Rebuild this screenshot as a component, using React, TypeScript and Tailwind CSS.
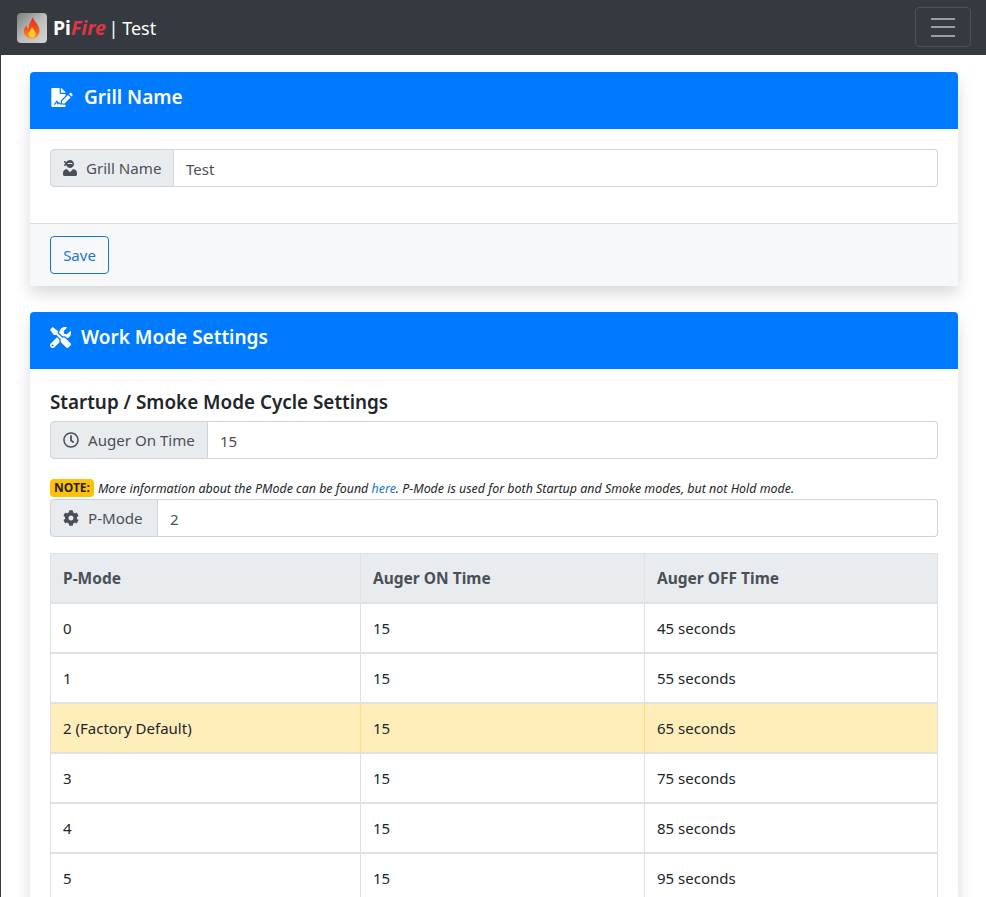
import React from "react";
import { FaFileSignature, FaUserNinja, FaTools, FaRegClock, FaCog } from "react-icons/fa";

const rows = [
  ["0", "15", "45 seconds"],
  ["1", "15", "55 seconds"],
  ["2 (Factory Default)", "15", "65 seconds"],
  ["3", "15", "75 seconds"],
  ["4", "15", "85 seconds"],
  ["5", "15", "95 seconds"],
];

function Logo() {
  return (
    <div className="w-[30px] h-[30px] rounded-[4px] bg-gradient-to-br from-[#7c7c7c] via-[#bdbdbd] to-[#d6d6d6] flex items-center justify-center">
      <svg width="16" height="22" viewBox="0 0 18 24">
        <defs>
          <linearGradient id="fl" x1="0" y1="0" x2="0" y2="1">
            <stop offset="0" stopColor="#e62a1c" />
            <stop offset="0.55" stopColor="#f4521c" />
            <stop offset="1" stopColor="#fb9f1e" />
          </linearGradient>
        </defs>
        <path d="M10 0c1 4 3 5 5 8 2 3 3 6 2 10-1 4-4 6-8 6s-8-2-9-6c-1-4 1-7 3-9 0 2 1 3 2 4 0-5 3-9 5-13z" fill="url(#fl)" />
        <path d="M9 11c1 3 4 4 4 8 0 2-2 4-4 4s-4-2-4-4c0-3 3-4 4-8z" fill="#fdc935" />
      </svg>
    </div>
  );
}

function Field({ icon, label, value, labelW }: { icon: React.ReactNode; label: string; value: string; labelW: string }) {
  return (
    <div className="flex h-[38px] text-[#495057]">
      <div className={`${labelW} shrink-0 flex items-center gap-[9px] pl-[12px] bg-[#e9ecef] border border-[#ced4da] rounded-l-[4px] text-[15.1px]`}>
        {icon}
        <span>{label}</span>
      </div>
      <div className="flex-1 flex items-center pl-[12px] pt-[2px] bg-white border border-l-0 border-[#ced4da] rounded-r-[4px] text-[15px]">
        {value}
      </div>
    </div>
  );
}

function CardHeader({ icon, title }: { icon: React.ReactNode; title: string }) {
  return (
    <div className="h-[57px] pb-[6px] bg-[#007bff] rounded-t-[4px] flex items-center pl-[20px] gap-[10px] text-white text-[19px] font-semibold">
      {icon}
      <span>{title}</span>
    </div>
  );
}

function Th({ children }: { children: React.ReactNode }) {
  return <th className="h-[51px] pt-[2px] border-t border-l last:border-r border-b-2 border-[#dee2e6] text-left pl-[12px] font-bold text-[15.5px]">{children}</th>;
}

export default function App() {
  return (
    <div className="h-screen overflow-hidden bg-white text-[#212529] font-['Noto_Sans','Open_Sans',sans-serif]">
      <nav className="h-[55px] bg-[#343a40] flex items-center justify-between pl-[17px] pr-[15px]">
        <div className="flex items-center gap-[6px] text-white">
          <Logo />
          <span className="pt-[1px] text-[18px]">
            <span className="font-bold text-[19.5px]">Pi</span>
            <span className="font-bold italic text-[19.5px] text-[#dc3545]">Fire</span>
            <span className="-ml-[1px] [word-spacing:-1px]"> | Test</span>
          </span>
        </div>
        <div className="w-[56px] h-[40px] mb-[1px] border border-[#4d5359] rounded-[4px] flex flex-col items-center justify-center gap-[6.5px]">
          <div className="w-[24px] h-[2px] bg-[#9a9da0]" />
          <div className="w-[24px] h-[2px] bg-[#9a9da0]" />
          <div className="w-[24px] h-[2px] bg-[#9a9da0]" />
        </div>
      </nav>
      <main className="border-l border-[#343a40] pl-[29px] pr-[28px] pt-[17px]">
        <section className="rounded-[4px] bg-white shadow-[0_8px_16px_rgba(0,0,0,0.15)]">
          <CardHeader icon={<FaFileSignature className="w-[24px] h-[19px]" />} title="Grill Name" />
          <div className="h-[94px] px-[20px] pt-[20px]">
            <Field icon={<FaUserNinja className="w-[14px] h-[16px]" />} label="Grill Name" value="Test" labelW="w-[124px]" />
          </div>
          <div className="h-[63px] bg-[#f7f8f9] border-t border-[#dfdfdf] rounded-b-[4px] px-[20px] pt-[12px]">
            <button className="w-[59px] h-[38px] border border-[#1976d2] rounded-[4px] text-[#1976d2] text-[15px]">Save</button>
          </div>
        </section>
        <section className="mt-[26px] rounded-[4px] bg-white shadow-[0_8px_16px_rgba(0,0,0,0.15)]">
          <CardHeader icon={<FaTools className="w-[21px] h-[21px]" />} title="Work Mode Settings" />
          <div className="px-[20px] pt-[20px]">
            <h5 className="text-[18.85px] leading-[26px] font-semibold mb-[6px]">Startup / Smoke Mode Cycle Settings</h5>
            <Field icon={<FaRegClock className="w-[16px] h-[16px]" />} label="Auger On Time" value="15" labelW="w-[158px]" />
            <p className="mt-[20px] text-[12.43px] leading-[18px] italic h-[20px] flex items-start">
              <span className="not-italic font-bold bg-[#ffc107] rounded-[4px] px-[4px] mr-[4px] h-[18px] leading-[18px] text-[12px]">NOTE:</span>
              <span className="mt-[1px]">More information about the PMode can be found <a className="text-[#1976d2]">here</a>. P-Mode is used for both Startup and Smoke modes, but not Hold mode.</span>
            </p>
            <Field icon={<FaCog className="w-[16px] h-[16px]" />} label="P-Mode" value="2" labelW="w-[108px]" />
            <table className="mt-[16px] w-full table-fixed border-separate border-spacing-0 text-[15px]">
              <colgroup>
                <col className="w-[310px]" />
                <col className="w-[284px]" />
                <col />
              </colgroup>
              <thead>
                <tr className="bg-[#e9ecef] text-[#495057]">
                  <Th>P-Mode</Th>
                  <Th>Auger ON Time</Th>
                  <Th>Auger OFF Time</Th>
                </tr>
              </thead>
              <tbody>
                {rows.map((r) => {
                  const warn = r[0].startsWith("2");
                  return (
                    <tr key={r[0]} className={warn ? "bg-[#ffeeba]" : ""}>
                      {r.map((c, i) => (
                        <td key={i} className={warn
                          ? "h-[50px] border-l last:border-r border-l-[#ffdf7e] last:border-r-[#dee2e6] first:border-l-[#dee2e6] border-b-2 border-b-[#dee2e6] pl-[12px]"
                          : "h-[50px] border-l last:border-r border-b-2 border-[#dee2e6] pl-[12px]"}>{c}</td>
                      ))}
                    </tr>
                  );
                })}
              </tbody>
            </table>
          </div>
        </section>
      </main>
    </div>
  );
}
